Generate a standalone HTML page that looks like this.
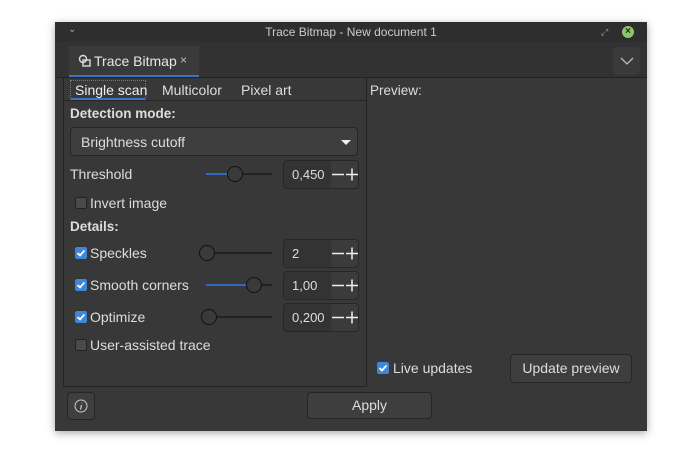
<!DOCTYPE html>
<html><head><style>
*{box-sizing:border-box;margin:0;padding:0}
body{width:700px;height:458px;background:#fff;font-family:"Liberation Sans","DejaVu Sans",sans-serif;font-size:13px;color:#ddd;position:relative;overflow:hidden}
.a{position:absolute}
.win{left:55px;top:22px;width:592px;height:409px;background:#383838;box-shadow:0 2px 8px rgba(0,0,0,.35)}
.title{left:0;top:0;width:592px;height:20px;background:#2e2e2e;text-align:center;line-height:20px;font-size:12px;color:#ccc}
.tabbar{left:0;top:20px;width:592px;height:36px;background:#323232;border-bottom:1px solid #222}
.btn{background:#3e3e3e;border:1px solid #262626;border-radius:4px;color:#ddd;text-align:center}
.cb{width:12px;height:12px;border-radius:2px;background:#4a4a4a;border:1px solid #222}
.cbx{width:12px;height:12px;border-radius:2px;background:#3d86d8}
.cbx svg{position:absolute;left:2px;top:2px}
.spin{width:76px;height:29px;border:1px solid #262626;border-radius:4px;background:#333;overflow:hidden}
.spin span{position:absolute;left:8px;top:6px}
.pm{position:absolute;top:0;height:27px;width:14px;background:#3b3b3b}
.track{height:2px;background:#222}
.knob{width:16px;height:16px;border-radius:50%;background:#3a3a3a;border:1px solid #111}
</style></head><body>
<div class="a win">
 <div class="a title">Trace Bitmap - New document 1
  <span class="a" style="left:13px;top:-2px;font-size:10px;color:#aaa">⌄</span>
  <span class="a" style="left:546px;top:0;font-size:9px;color:#999">⤢</span>
  <span class="a" style="left:567px;top:4px;width:12px;height:12px;border-radius:50%;background:#8ec46b;color:#1e2e1a;font-size:10px;line-height:12px;font-weight:bold">×</span>
 </div>
 <div class="a tabbar">
  <div class="a" style="left:14px;top:4px;width:130px;height:31px;background:#3a3a3a;border-bottom:2px solid #3a74c5">
   <svg class="a" style="left:9px;top:8px" width="14" height="14"><circle cx="5" cy="5" r="3.5" stroke="#ddd" fill="none" stroke-width="1.4"/><rect x="5" y="6" width="7" height="6" stroke="#ddd" fill="none" stroke-width="1.4"/></svg>
   <span class="a" style="left:25px;top:7px;font-size:14px;color:#e6e6e6">Trace Bitmap</span>
   <span class="a" style="left:111px;top:7px;font-size:12px;color:#bbb">×</span>
  </div>
  <div class="a btn" style="left:558px;top:5px;width:27px;height:28px;background:#3a3a3a;border:none">
   <svg width="14" height="8" style="margin-top:10px"><path d="M1 1L7 7L13 1" stroke="#bbb" fill="none" stroke-width="1.3"/></svg></div>
 </div>
 <div class="a" style="left:8px;top:56px;width:304px;height:309px;border:1px solid #242424;border-top:none">
  <div class="a" style="left:0;top:22px;width:302px;height:1px;background:#262626"></div>
  <div class="a" style="left:6px;top:2px;width:76px;height:20px;border:1px dotted #777;border-bottom:2px solid #3a74c5"></div>
  <span class="a" style="left:11px;top:4px;font-size:14px;color:#eee">Single scan</span>
  <span class="a" style="left:98px;top:4px;font-size:14px">Multicolor</span>
  <span class="a" style="left:177px;top:4px;font-size:14px">Pixel art</span>
 </div>
 <span class="a" style="left:15px;top:84px;font-weight:bold;font-size:13.5px">Detection mode:</span>
 <div class="a btn" style="left:15px;top:105px;width:288px;height:29px;text-align:left;padding:6px 10px;font-size:14px">Brightness cutoff
  <svg class="a" style="left:270px;top:12px" width="10" height="6"><path d="M0 0H10L5 5Z" fill="#eee"/></svg></div>
 <span class="a" style="left:15px;top:144px;font-size:14px">Threshold</span>
 <div class="a cb" style="left:20px;top:175px"></div><span class="a" style="left:35px;top:173px;font-size:14px">Invert image</span>
 <span class="a" style="left:15px;top:197px;font-weight:bold;font-size:13.5px">Details:</span>
 <div class="a cbx" style="left:20px;top:225px"><svg width="8" height="8"><path d="M0.5 4L3 6.5L7.5 1.5" stroke="#fff" stroke-width="1.8" fill="none"/></svg></div><span class="a" style="left:35px;top:223px;font-size:14px">Speckles</span>
 <div class="a cbx" style="left:20px;top:257px"><svg width="8" height="8"><path d="M0.5 4L3 6.5L7.5 1.5" stroke="#fff" stroke-width="1.8" fill="none"/></svg></div><span class="a" style="left:35px;top:255px;font-size:14px">Smooth corners</span>
 <div class="a cbx" style="left:20px;top:289px"><svg width="8" height="8"><path d="M0.5 4L3 6.5L7.5 1.5" stroke="#fff" stroke-width="1.8" fill="none"/></svg></div><span class="a" style="left:35px;top:287px;font-size:14px">Optimize</span>
 <div class="a cb" style="left:20px;top:317px"></div><span class="a" style="left:35px;top:315px;font-size:14px">User-assisted trace</span>
 <div class="a track" style="left:151px;top:151px;width:66px"></div><div class="a" style="left:151px;top:151px;width:30px;height:2px;background:#2f6ac0"></div><div class="a knob" style="left:172px;top:144px"></div>
 <div class="a track" style="left:150px;top:230px;width:67px"></div><div class="a knob" style="left:144px;top:223px"></div>
 <div class="a track" style="left:151px;top:262px;width:66px"></div><div class="a" style="left:151px;top:262px;width:45px;height:2px;background:#2f6ac0"></div><div class="a knob" style="left:191px;top:255px"></div>
 <div class="a track" style="left:152px;top:294px;width:65px"></div><div class="a knob" style="left:146px;top:287px"></div>
 <div class="a spin" style="left:228px;top:138px"><span>0,450</span><div class="pm" style="left:47px"><svg width="14" height="27"><path d="M1 13.5H13" stroke="#eee" stroke-width="1.5"/></svg></div><div class="pm" style="left:61px"><svg width="14" height="27"><path d="M1 13.5H13M7 7.5V19.5" stroke="#eee" stroke-width="1.5"/></svg></div></div>
 <div class="a spin" style="left:228px;top:217px"><span>2</span><div class="pm" style="left:47px"><svg width="14" height="27"><path d="M1 13.5H13" stroke="#eee" stroke-width="1.5"/></svg></div><div class="pm" style="left:61px"><svg width="14" height="27"><path d="M1 13.5H13M7 7.5V19.5" stroke="#eee" stroke-width="1.5"/></svg></div></div>
 <div class="a spin" style="left:228px;top:249px"><span>1,00</span><div class="pm" style="left:47px"><svg width="14" height="27"><path d="M1 13.5H13" stroke="#eee" stroke-width="1.5"/></svg></div><div class="pm" style="left:61px"><svg width="14" height="27"><path d="M1 13.5H13M7 7.5V19.5" stroke="#eee" stroke-width="1.5"/></svg></div></div>
 <div class="a spin" style="left:228px;top:281px"><span>0,200</span><div class="pm" style="left:47px"><svg width="14" height="27"><path d="M1 13.5H13" stroke="#eee" stroke-width="1.5"/></svg></div><div class="pm" style="left:61px"><svg width="14" height="27"><path d="M1 13.5H13M7 7.5V19.5" stroke="#eee" stroke-width="1.5"/></svg></div></div>
 <span class="a" style="left:315px;top:61px;font-size:13.5px">Preview:</span>
 <div class="a cbx" style="left:322px;top:340px"><svg width="8" height="8"><path d="M0.5 4L3 6.5L7.5 1.5" stroke="#fff" stroke-width="1.8" fill="none"/></svg></div><span class="a" style="left:338px;top:338px;font-size:14px">Live updates</span>
 <div class="a btn" style="left:455px;top:332px;width:122px;height:29px;line-height:27px;font-size:14px">Update preview</div>
 <div class="a btn" style="left:12px;top:370px;width:28px;height:28px">
  <svg width="14" height="14" style="margin-top:6px"><circle cx="7" cy="7" r="6" stroke="#ccc" fill="none"/><path d="M7.5 6L6.5 10.5M7.8 3.8V4.2" stroke="#ccc" stroke-width="1.2"/></svg></div>
 <div class="a btn" style="left:252px;top:370px;width:125px;height:27px;line-height:25px;font-size:14px">Apply</div>
</div>
</body></html>
